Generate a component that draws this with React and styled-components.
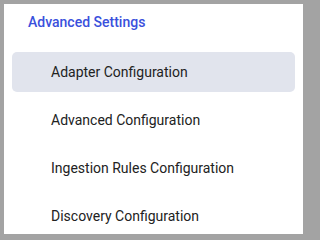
import React from "react";
import styled, { createGlobalStyle } from "styled-components";

const GlobalStyle = createGlobalStyle`
  html, body {
    margin: 0;
    padding: 0;
    background: #a3a3a3;
  }
  body {
    font-family: Roboto, "Liberation Sans", Arial, sans-serif;
  }
`;

const items = [
  "Adapter Configuration",
  "Advanced Configuration",
  "Ingestion Rules Configuration",
  "Discovery Configuration",
];

export default function App() {
  const active = 0;
  return (
    <>
      <GlobalStyle />
      <Frame>
        <Panel>
          <Title>Advanced Settings</Title>
          <Menu>
            {items.map((label, i) => (
              <Item key={label} $active={i === active}>
                {label}
              </Item>
            ))}
          </Menu>
        </Panel>
      </Frame>
    </>
  );
}

const Frame = styled.div`
  width: 307px;
  height: 238px;
  padding: 4px;
  box-sizing: border-box;
  background: #a3a3a3;
`;

const Panel = styled.div`
  height: 100%;
  background: #ffffff;
  padding: 8px 8px 0 8px;
  box-sizing: border-box;
  overflow: hidden;
`;

const Title = styled.div`
  font-size: 14px;
  line-height: 20px;
  font-weight: 500;
  color: #3a50dc;
  padding-left: 16px;
  margin-bottom: 20px;
`;

const Menu = styled.div`
  display: flex;
  flex-direction: column;
  gap: 8px;
`;

const Item = styled.div`
  height: 40px;
  display: flex;
  align-items: center;
  padding-left: 39px;
  border-radius: 5px;
  font-size: 14px;
  color: #222222;
  background: ${(p) => (p.$active ? "#e1e4ed" : "transparent")};
  flex-shrink: 0;
`;
